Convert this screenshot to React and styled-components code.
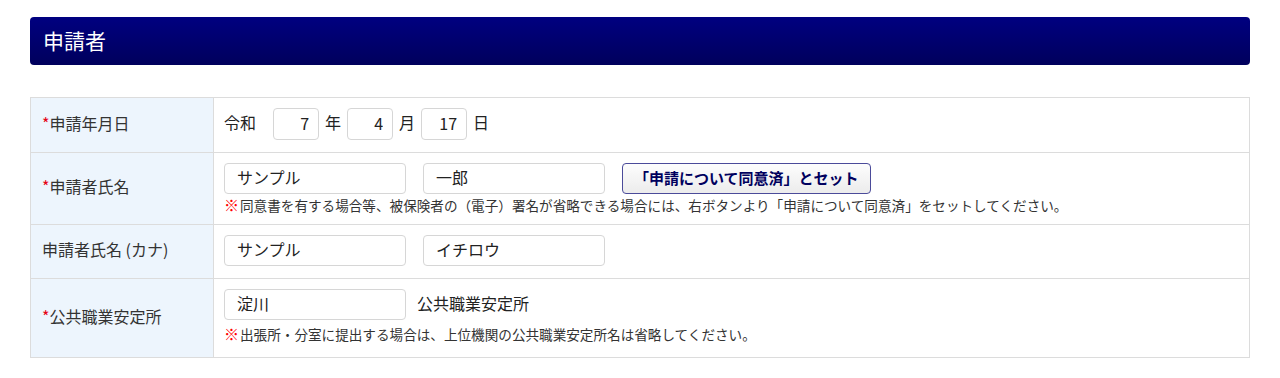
import React from 'react';
import styled, { createGlobalStyle } from 'styled-components';

const GlobalStyle = createGlobalStyle`
  body {
    margin: 0;
    background: #fff;
    font-family: "Noto Sans CJK JP", "Liberation Sans", sans-serif;
    color: #333;
  }
`;

const Page = styled.div`
  padding: 17px 30px 20px;
`;

const SectionTitle = styled.h2`
  margin: 0;
  height: 48px;
  display: flex;
  align-items: center;
  padding: 0 13px 2px;
  box-sizing: border-box;
  border-radius: 4px;
  background: linear-gradient(to bottom, #000080, #00005c);
  color: #fff;
  font-size: 21px;
  font-weight: normal;
`;

const Table = styled.table`
  width: 100%;
  margin-top: 32px;
  border-collapse: collapse;
  font-size: 16px;
`;

const Label = styled.th`
  width: 183px;
  box-sizing: border-box;
  background: #edf5fd;
  border: 1px solid #dcdcdc;
  padding: 0 11px 5px;
  text-align: left;
  font-weight: normal;
  color: #333;
  height: ${(p) => p.$h}px;
`;

const Req = styled.span`
  color: #e60012;
`;

const Cell = styled.td`
  border: 1px solid #dcdcdc;
  padding: ${(p) => p.$pad || '10px 10px'};
  vertical-align: top;
`;

const Line = styled.div`
  display: flex;
  align-items: center;
  gap: ${(p) => p.$gap || 17}px;
`;

const Input = styled.input`
  box-sizing: border-box;
  width: ${(p) => p.$w || 182}px;
  height: ${(p) => p.$h || 31}px;
  border: 1px solid #d6d6d6;
  border-radius: 4px;
  padding: 0 ${(p) => (p.$num ? '9px' : '12px')} 3px;
  text-align: ${(p) => (p.$num ? 'right' : 'left')};
  font: inherit;
  font-size: 16px;
  color: #222;
  background: #fff;
`;

const Unit = styled.span`
  color: #222;
  margin-right: ${(p) => p.$mr || 0}px;
  padding-bottom: 4px;
`;

const SetButton = styled.button`
  height: 31px;
  padding: 0 11px 2px;
  border: 1px solid #4b4b9a;
  border-radius: 4px;
  background: linear-gradient(to bottom, #fdfdfd, #ececec);
  color: #00005e;
  font: inherit;
  font-size: 15px;
  font-weight: bold;
`;

const Note = styled.p`
  margin: ${(p) => p.$mt || 2}px 0 0;
  font-size: 13.6px;
  color: #333;
  line-height: 18px;
`;

const Mark = styled.span`
  color: #f00;
  font-weight: bold;
  font-size: 15px;
  margin-right: 1px;
`;

export default function App() {
  return (
    <Page>
      <GlobalStyle />
      <SectionTitle>申請者</SectionTitle>
      <Table>
        <tbody>
          <tr>
            <Label $h={55}><Req>*</Req>申請年月日</Label>
            <Cell $pad="10px 10px 11px">
              <Line $gap={6}>
                <Unit $mr={11}>令和</Unit>
                <Input $w={46} $h={32} $num defaultValue="7" />
                <Unit>年</Unit>
                <Input $w={46} $h={32} $num defaultValue="4" />
                <Unit>月</Unit>
                <Input $w={46} $h={32} $num defaultValue="17" />
                <Unit>日</Unit>
              </Line>
            </Cell>
          </tr>
          <tr>
            <Label $h={72}><Req>*</Req>申請者氏名</Label>
            <Cell $pad="10px 10px 8px">
              <Line>
                <Input defaultValue="サンプル" />
                <Input defaultValue="一郎" />
                <SetButton>「申請について同意済」とセット</SetButton>
              </Line>
              <Note><Mark>※</Mark>同意書を有する場合等、被保険者の（電子）署名が省略できる場合には、右ボタンより「申請について同意済」をセットしてください。</Note>
            </Cell>
          </tr>
          <tr>
            <Label $h={54}>申請者氏名 (カナ)</Label>
            <Cell $pad="10px 10px 11px">
              <Line>
                <Input defaultValue="サンプル" />
                <Input defaultValue="イチロウ" />
              </Line>
            </Cell>
          </tr>
          <tr>
            <Label $h={79}><Req>*</Req>公共職業安定所</Label>
            <Cell $pad="10px 10px 13px">
              <Line $gap={11}>
                <Input defaultValue="淀川" />
                <Unit>公共職業安定所</Unit>
              </Line>
              <Note $mt={5}><Mark>※</Mark>出張所・分室に提出する場合は、上位機関の公共職業安定所名は省略してください。</Note>
            </Cell>
          </tr>
        </tbody>
      </Table>
    </Page>
  );
}
